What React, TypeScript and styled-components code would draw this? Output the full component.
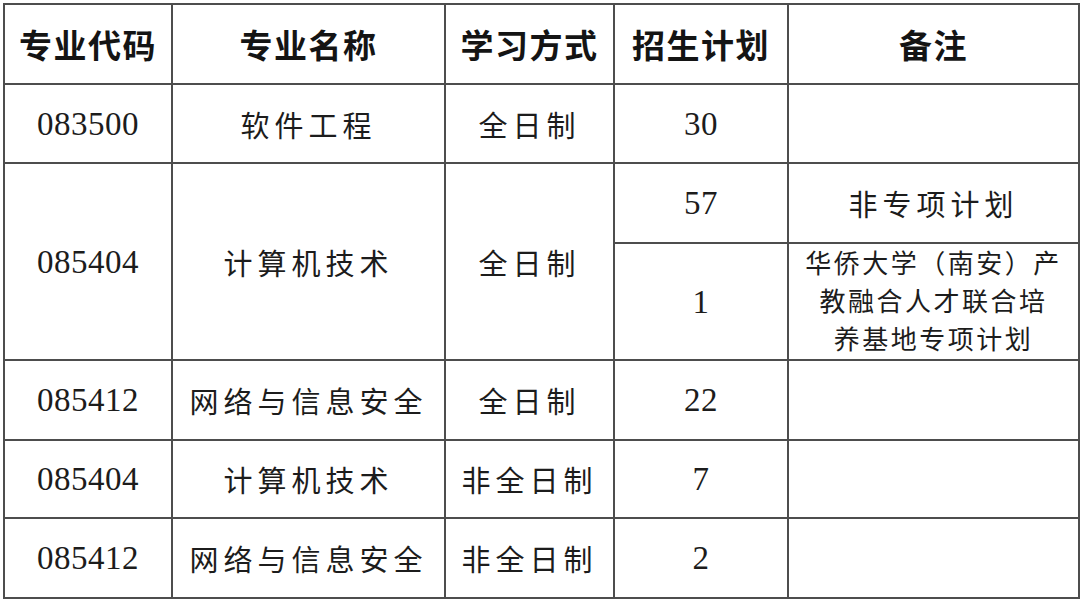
import * as React from "react";
import styled, { createGlobalStyle } from "styled-components";

const GlobalStyle = createGlobalStyle`
  html, body {
    margin: 0;
    padding: 0;
    background: #ffffff;
  }
  body {
    width: 1080px;
    height: 602px;
    overflow: hidden;
  }
`;

const Page = styled.div`
  padding: 3px 0 0 3px;
  font-family: "Noto Sans CJK SC", sans-serif;
  color: #141414;
`;

const Table = styled.table`
  border-collapse: collapse;
  table-layout: fixed;
  width: 1075px;
  border: 2px solid #4d4d4d;
`;

const Row = styled.tr<{ $h: number }>`
  height: ${p => p.$h}px;
`;

const Head = styled.th`
  border: 2px solid #4d4d4d;
  padding: 0;
  font-size: 33px;
  font-weight: 700;
  letter-spacing: 1.5px;
  text-align: center;
  vertical-align: middle;
`;

const Cell = styled.td<{ $num?: boolean; $small?: boolean }>`
  border: 2px solid #4d4d4d;
  padding: 0;
  text-align: center;
  vertical-align: middle;
  font-family: ${p =>
    p.$num ? `"Liberation Serif", "Noto Sans CJK SC", serif` : `"Noto Sans CJK SC", sans-serif`};
  font-size: ${p => (p.$num ? 33 : p.$small ? 26 : 29)}px;
  letter-spacing: ${p => (p.$num ? 0.5 : p.$small ? 2.5 : 5)}px;
  line-height: ${p => (p.$small ? 38 : 40)}px;
  font-weight: 400;
  color: #1c1c1c;
`;

const Note = styled.div`
  margin-top: -4px;
  white-space: nowrap;
`;

const NoteLine = styled.div``;

const widths = [168, 273, 169, 174, 291];

export default function App() {
  return (
    <Page>
      <GlobalStyle />
      <Table>
        <colgroup>
          {widths.map((w, i) => (
            <col key={i} style={{ width: w }} />
          ))}
        </colgroup>
        <thead>
          <Row $h={80}>
            <Head>专业代码</Head>
            <Head>专业名称</Head>
            <Head>学习方式</Head>
            <Head>招生计划</Head>
            <Head>备注</Head>
          </Row>
        </thead>
        <tbody>
          <Row $h={79}>
            <Cell $num>083500</Cell>
            <Cell>软件工程</Cell>
            <Cell>全日制</Cell>
            <Cell $num>30</Cell>
            <Cell />
          </Row>
          <Row $h={80}>
            <Cell $num rowSpan={2}>085404</Cell>
            <Cell rowSpan={2}>计算机技术</Cell>
            <Cell rowSpan={2}>全日制</Cell>
            <Cell $num>57</Cell>
            <Cell>非专项计划</Cell>
          </Row>
          <Row $h={117}>
            <Cell $num>1</Cell>
            <Cell $small>
              <Note>
                <NoteLine>华侨大学（南安）产</NoteLine>
                <NoteLine>教融合人才联合培</NoteLine>
                <NoteLine>养基地专项计划</NoteLine>
              </Note>
            </Cell>
          </Row>
          <Row $h={80}>
            <Cell $num>085412</Cell>
            <Cell>网络与信息安全</Cell>
            <Cell>全日制</Cell>
            <Cell $num>22</Cell>
            <Cell />
          </Row>
          <Row $h={78}>
            <Cell $num>085404</Cell>
            <Cell>计算机技术</Cell>
            <Cell>非全日制</Cell>
            <Cell $num>7</Cell>
            <Cell />
          </Row>
          <Row $h={80}>
            <Cell $num>085412</Cell>
            <Cell>网络与信息安全</Cell>
            <Cell>非全日制</Cell>
            <Cell $num>2</Cell>
            <Cell />
          </Row>
        </tbody>
      </Table>
    </Page>
  );
}
